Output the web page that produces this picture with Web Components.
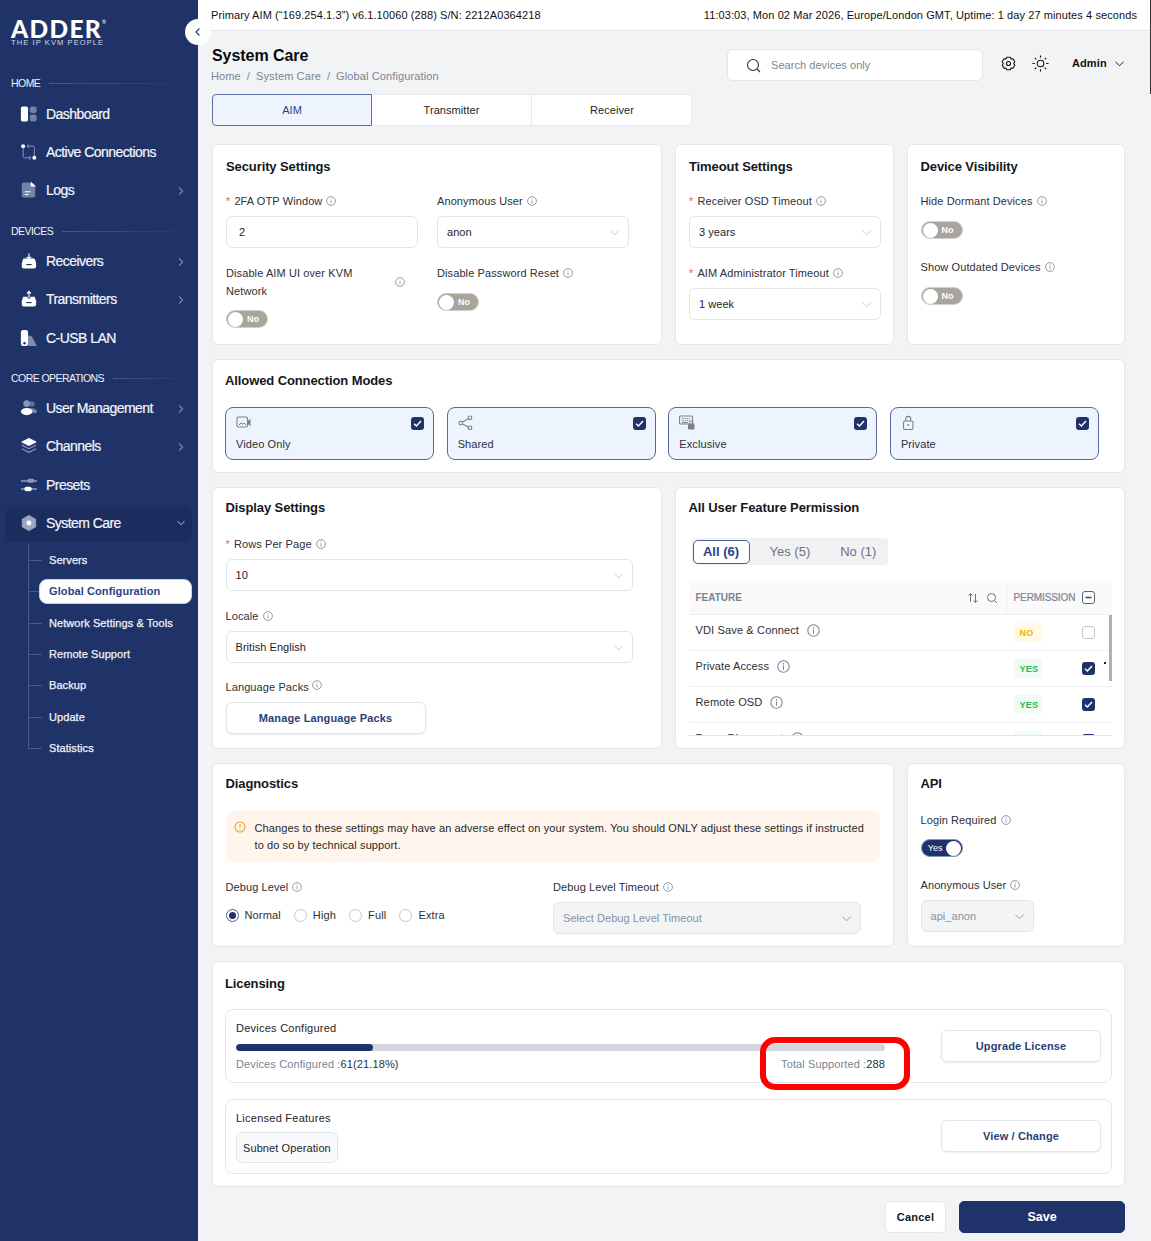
<!DOCTYPE html>
<html lang="en">
<head>
<meta charset="utf-8">
<title>System Care</title>
<style>
  html, body { margin: 0; height: 1241px; overflow: hidden; background: #f2f3f5; }
  body { font-family: "Liberation Sans", Arial, sans-serif; color: #1f2329; }
</style>
</head>
<body>

<app-shell>
  <side-bar slot="side">
    <nav-heading>HOME</nav-heading>
    <nav-item icon="dashboard">Dashboard</nav-item>
    <nav-item icon="connections">Active Connections</nav-item>
    <nav-item icon="logs" arrow="right">Logs</nav-item>
    <nav-heading>DEVICES</nav-heading>
    <nav-item icon="receivers" arrow="right">Receivers</nav-item>
    <nav-item icon="transmitters" arrow="right">Transmitters</nav-item>
    <nav-item icon="cusb">C-USB LAN</nav-item>
    <nav-heading>CORE OPERATIONS</nav-heading>
    <nav-item icon="users" arrow="right">User Management</nav-item>
    <nav-item icon="channels" arrow="right">Channels</nav-item>
    <nav-item icon="presets">Presets</nav-item>
    <nav-item icon="care" arrow="down" open>System Care</nav-item>
    <sub-item>Servers</sub-item>
    <sub-item current>Global Configuration</sub-item>
    <sub-item>Network Settings &amp; Tools</sub-item>
    <sub-item>Remote Support</sub-item>
    <sub-item>Backup</sub-item>
    <sub-item>Update</sub-item>
    <sub-item last>Statistics</sub-item>
  </side-bar>

  <status-bar></status-bar>
  <page-head></page-head>
  <tab-strip></tab-strip>

  <card-row cols="450px 219px 218px" style="margin-top:18px">
    <set-card heading="Security Settings" style="--pt:12px;--pl:13px;height:201px">
      <div style="display:grid;grid-template-columns:192px 192px;column-gap:19px;row-gap:16px">
        <div><field-label required>2FA OTP Window</field-label><pick-box value="2" plain></pick-box></div>
        <div><field-label>Anonymous User</field-label><pick-box value="anon"></pick-box></div>
        <div><field-label wrap>Disable AIM UI over KVM Network</field-label><flip-toggle style="margin-top:10px"></flip-toggle></div>
        <div><field-label>Disable Password Reset</field-label><flip-toggle style="margin-top:11px"></flip-toggle></div>
      </div>
    </set-card>
    <set-card heading="Timeout Settings" style="--pt:12px;--pl:13px;height:201px">
      <div style="display:grid;width:192px;row-gap:16px">
        <div><field-label required>Receiver OSD Timeout</field-label><pick-box value="3 years"></pick-box></div>
        <div><field-label required>AIM Administrator Timeout</field-label><pick-box value="1 week"></pick-box></div>
      </div>
    </set-card>
    <set-card heading="Device Visibility" style="--pt:12px;--pl:12.5px;height:201px">
      <field-label>Hide Dormant Devices</field-label><flip-toggle style="margin-top:11px"></flip-toggle>
      <field-label style="margin-top:19px">Show Outdated Devices</field-label><flip-toggle style="margin-top:11px"></flip-toggle>
    </set-card>
  </card-row>

  <card-row cols="913px">
    <set-card heading="Allowed Connection Modes" style="--pt:11px;--pl:12px;--mb:16px;height:114px">
      <div style="display:grid;grid-template-columns:repeat(4,1fr);gap:12.5px;width:874px">
        <mode-tile icon="video">Video Only</mode-tile>
        <mode-tile icon="share">Shared</mode-tile>
        <mode-tile icon="keylock">Exclusive</mode-tile>
        <mode-tile icon="lock">Private</mode-tile>
      </div>
    </set-card>
  </card-row>

  <card-row cols="450px 450px">
    <set-card heading="Display Settings" style="--pt:10px;--pl:12.5px;--mb:17px;height:262px">
      <div style="display:grid;width:407px">
        <div><field-label required>Rows Per Page</field-label><pick-box value="10"></pick-box></div>
        <div style="margin-top:16px"><field-label>Locale</field-label><pick-box value="British English"></pick-box></div>
        <div style="margin-top:15px"><field-label raised>Language Packs</field-label><line-button style="width:200px">Manage Language Packs</line-button></div>
      </div>
    </set-card>
    <set-card heading="All User Feature Permission" style="--pt:10px;--pl:12.5px;--mb:20px;height:262px">
      <seg-filter></seg-filter>
      <perm-table style="margin-top:16px">
        <perm-row feature="VDI Save &amp; Connect" no size="11.1"></perm-row>
        <perm-row feature="Private Access" size="11"></perm-row>
        <perm-row feature="Remote OSD" size="11.1"></perm-row>
        <perm-row feature="Force Disconnect" size="11.1"></perm-row>
      </perm-table>
    </set-card>
  </card-row>

  <card-row cols="682px 218px">
    <set-card heading="Diagnostics" style="--pt:10px;--pl:12.5px;--mb:17px;height:184px">
      <warn-note>Changes to these settings may have an adverse effect on your system. You should ONLY adjust these settings if instructed to do so by technical support.</warn-note>
      <div style="display:grid;grid-template-columns:327.5px 308px;margin-top:16px">
        <div><field-label>Debug Level</field-label>
          <radio-row style="margin-top:10px">
            <radio-opt checked>Normal</radio-opt><radio-opt>High</radio-opt><radio-opt>Full</radio-opt><radio-opt>Extra</radio-opt>
          </radio-row>
        </div>
        <div><field-label>Debug Level Timeout</field-label><pick-box placeholder="Select Debug Level Timeout" disabled></pick-box></div>
      </div>
    </set-card>
    <set-card heading="API" style="--pt:10px;--pl:12.5px;--mb:17px;height:184px">
      <field-label>Login Required</field-label><flip-toggle on style="margin-top:10px"></flip-toggle>
      <field-label style="margin-top:19px">Anonymous User</field-label>
      <pick-box placeholder="api_anon" disabled style="width:113px"></pick-box>
    </set-card>
  </card-row>

  <card-row cols="913px">
    <set-card heading="Licensing" style="--pt:12px;--pl:12px;--mb:15px;height:226px">
      <license-box action="Upgrade License" style="height:74px">
        <div style="font-size:11px;line-height:18px;letter-spacing:.25px">Devices Configured</div>
        <usage-bar used="21.18"></usage-bar>
        <red-mark></red-mark>
      </license-box>
      <license-box action="View / Change" style="height:75px;margin-top:16px">
        <div style="font-size:11px;line-height:18px;letter-spacing:.25px">Licensed Features</div>
        <feature-chip>Subnet Operation</feature-chip>
      </license-box>
    </set-card>
  </card-row>

  <form-actions></form-actions>
</app-shell>

<script>
// icons used by the sidebar, drawn in a 19x19 box
const NAV_ICONS = {
  dashboard: `<rect x="1" y="1" width="8" height="17" rx="2" fill="#fff"/><rect x="11" y="1" width="7.500" height="7.500" rx="2" fill="#6f7fa6"/><rect x="11" y="10" width="7.500" height="8" rx="2" fill="#6f7fa6"/>`,
  connections: `<circle cx="3.500" cy="3" r="2.200" fill="#fff"/><circle cx="16" cy="16" r="2.200" fill="#fff"/><path d="M3.500 5v9.500A1.500 1.500 0 0 0 5 16h7M10 14l2.200 2-2.200 2M16 14V4.500A1.500 1.500 0 0 0 14.500 3H8M10 1L7.800 3 10 5" fill="none" stroke="#8a97b8" stroke-width="1.100"/>`,
  logs: `<path d="M4 1h7l6 5.500V16a2 2 0 0 1-2 2H4a2 2 0 0 1-2-2V3a2 2 0 0 1 2-2z" fill="#7382a8"/><path d="M12 0l6 5.500h-6z" fill="#fff"/><path d="M5.500 11.500h6.500M5.500 14.500h4" stroke="#fff" stroke-width="1.300"/>`,
  receivers: `<path d="M5 7h3M12 7h3" stroke="#8a97b8" stroke-width="2"/><path d="M3.500 7h13L18 12v4a2 2 0 0 1-2 2H4a2 2 0 0 1-2-2v-4z" fill="#fff"/><path d="M7 13.500h6" stroke="#1f3368" stroke-width="1.300"/><path d="M10 1v6M7.800 5L10 7.500 12.200 5" fill="none" stroke="#fff" stroke-width="1.300"/>`,
  transmitters: `<path d="M3.500 7h13L18 12v4a2 2 0 0 1-2 2H4a2 2 0 0 1-2-2v-4z" fill="#fff"/><path d="M7 13.500h6" stroke="#1f3368" stroke-width="1.300"/><path d="M10 9V1M7.800 3.500L10 1l2.200 2.500" fill="none" stroke="#1f3368" stroke-width="3"/><path d="M10 8V1M7.800 3.500L10 1l2.200 2.500" fill="none" stroke="#fff" stroke-width="1.300"/>`,
  cusb: `<path d="M9 6.500l4 1 6 11H9z" fill="#7f8db1"/><rect x="1" y="0.500" width="8" height="18" rx="2.500" fill="#fff"/><circle cx="5" cy="15.500" r="1.400" fill="#1f3368"/>`,
  users: `<circle cx="13.500" cy="5" r="3" fill="#5f6f9a"/><path d="M11 10c4-1 8 .5 8 3.500 0 1.500-2 2-4 2z" fill="#7382a8"/><circle cx="7.500" cy="4.500" r="3.800" fill="#8a97b8"/><ellipse cx="7.500" cy="13.500" rx="6.500" ry="4" fill="#fff"/>`,
  channels: `<path d="M10 1l8 4-8 4-8-4z" fill="#fff" stroke="#fff" stroke-linejoin="round"/><path d="M2 8.500l8 4 8-4M2 12.500l8 4 8-4" fill="none" stroke="#8a97b8" stroke-width="1.300"/>`,
  presets: `<path d="M1 5h18M1 14h18" stroke="#c9d0e0" stroke-width="1.200"/><rect x="8" y="2.500" width="8" height="4.500" rx="2" fill="#8a97b8"/><rect x="5" y="11.500" width="8" height="5" rx="2" fill="#fff"/>`,
  care: `<path d="M10 1l7.500 4.300v8.400L10 18l-7.500-4.300V5.300z" fill="#9aa6c4" stroke="#9aa6c4" stroke-linejoin="round"/><circle cx="10" cy="9.500" r="2.700" fill="#fff"/>`
};

// icons for the connection mode tiles
const MODE_ICONS = {
  video: `<rect x="1" y="2" width="10.500" height="10" rx="1.500" fill="none" stroke="#7b8088" stroke-width="1.100"/><path d="M3 10l2-2 1.500 1.200L8 8l2 2" fill="none" stroke="#7b8088"/><path d="M11.500 6l3-2v7l-3-2z" fill="#7b8088"/>`,
  share: `<circle cx="12" cy="2.800" r="1.800" fill="none" stroke="#7b8088" stroke-width="1.100"/><circle cx="2.800" cy="8" r="1.800" fill="none" stroke="#7b8088" stroke-width="1.100"/><circle cx="12" cy="12.800" r="1.800" fill="none" stroke="#7b8088" stroke-width="1.100"/><path d="M4.400 7l6-3.200M4.400 9l6 3" stroke="#7b8088" stroke-width="1.100"/>`,
  keylock: `<rect x="0.500" y="1" width="13" height="8" rx="1" fill="none" stroke="#7b8088" stroke-width="1.100"/><path d="M2.500 3.500h9M2.500 5.500h9" stroke="#7b8088" stroke-width="1.200" stroke-dasharray="1 .8"/><path d="M3 7.500h6" stroke="#7b8088"/><rect x="9" y="9" width="6.500" height="5.500" rx="1" fill="#7b8088"/><path d="M10.500 9V7.500a1.800 1.800 0 0 1 3.500 0V9" fill="none" stroke="#7b8088"/>`,
  lock: `<rect x="2.500" y="6" width="9.500" height="8.500" rx="1.500" fill="none" stroke="#7b8088" stroke-width="1.100"/><path d="M4.800 6V3.800a2.400 2.400 0 0 1 4.900 0V6" fill="none" stroke="#7b8088" stroke-width="1.100"/><circle cx="7.300" cy="10" r=".9" fill="#7b8088"/>`
};

const CHEVRON = (c, size) => `<svg width="${size}" height="${size}" viewBox="0 0 12 12" fill="none" stroke="${c}" stroke-width="1"><path d="M1.500 4l4.500 4.500L10.500 4"/></svg>`;

class AppShell extends HTMLElement {
  constructor() {
    super();
    this.attachShadow({ mode: 'open' }).innerHTML = `
      <style>
        :host { display: grid; grid-template-columns: 198px 953px; height: 1241px; position: relative; }
        main { display: block; min-width: 0; }
        .edge { position: absolute; right: 0; top: 0; width: 1px; height: 94px; background: #333; }
        .collapse { position: absolute; left: 185px; top: 19px; width: 26px; height: 26px; border-radius: 50%; background: #fff;
          display: flex; align-items: center; justify-content: center; }
      </style>
      <slot name="side"></slot>
      <main><slot></slot></main>
      <div class="edge"></div>
      <div class="collapse"><svg width="10" height="10" viewBox="0 0 10 10" fill="none" stroke="#2a4387" stroke-width="1.200"><path d="M6.500 1.500L3 5l3.500 3.500"/></svg></div>`;
  }
}

class SideBar extends HTMLElement {
  constructor() {
    super();
    this.attachShadow({ mode: 'open' }).innerHTML = `
      <style>
        :host { display: block; background: #1f3368; color: #fff; height: 1241px; }
        .logo { height: 72px; box-sizing: border-box; padding: 17.5px 0 0 11px; position: relative; }
        .name { font: 900 24.5px/21px Lato, sans-serif; letter-spacing: 1.3px; }
        .name sup { font-size: 5px; font-weight: 400; vertical-align: 14px; letter-spacing: 0; line-height: 0; }
        .strap { font: 400 7.5px/9px "Liberation Sans", sans-serif; letter-spacing: 1.1px; color: #d5daea; margin-top: -1px; }
      </style>
      <div class="logo"><div class="name">ADDER<sup>®</sup></div><div class="strap">THE IP KVM PEOPLE</div></div>
      <slot></slot>`;
  }
}

class NavHeading extends HTMLElement {
  constructor() {
    super();
    this.attachShadow({ mode: 'open' }).innerHTML = `
      <style>
        :host { display: flex; align-items: center; height: 22px; padding-left: 11px; margin-top: 10.5px; font-size: 10.5px; letter-spacing: -.55px; color: #eef0f6; gap: 9px; }
        :host(:first-of-type) { margin-top: 0; margin-bottom: 1px; }
        i { flex: 1; height: 1px; margin-right: 16px; background: linear-gradient(90deg, #46598c, #223669); }
      </style>
      <slot></slot><i></i>`;
  }
}

class NavItem extends HTMLElement {
  constructor() {
    super();
    const arrow = this.getAttribute('arrow');
    const glyph = arrow === 'right'
      ? `<svg class="arrow" width="10" height="10" viewBox="0 0 10 10" fill="none" stroke="#b8c0d6" stroke-width="1"><path d="M3 1.500L6.700 5 3 8.500"/></svg>`
      : arrow === 'down'
        ? `<svg class="arrow" width="10" height="10" viewBox="0 0 10 10" fill="none" stroke="#b8c0d6" stroke-width="1"><path d="M1.500 3L5 6.700 8.500 3"/></svg>` : '';
    this.attachShadow({ mode: 'open' }).innerHTML = `
      <style>
        :host { display: flex; align-items: center; height: 38.2px; padding-left: 20px; box-sizing: border-box; font-size: 14px; letter-spacing: -.55px; color: #f4f6fa; -webkit-text-stroke: .2px #f4f6fa; position: relative; }
        :host([open]) { height: 35px; margin: 3px 6px 2.7px 5px; padding: 0 0 3px 15px; background: #1c2c5e; border-radius: 8px; }
        svg.ico { width: 17px; height: 18px; margin-right: 9px; flex: none; }
        .arrow { position: absolute; right: 12px; top: 50%; margin-top: -4px; }
        :host([open]) .arrow { right: 6px; margin-top: -6px; }
      </style>
      <svg class="ico" viewBox="0 0 19 19">${NAV_ICONS[this.getAttribute('icon')]}</svg>
      <span><slot></slot></span>${glyph}`;
  }
}

class SubItem extends HTMLElement {
  constructor() {
    super();
    this.attachShadow({ mode: 'open' }).innerHTML = `
      <style>
        :host { display: flex; align-items: center; height: 31.35px; margin: 0 6px 0 39px; position: relative; font-size: 11px; letter-spacing: .07px; color: #f0f2f7; -webkit-text-stroke: .25px #f0f2f7; }
        :host(:not([last]))::after { content: ""; position: absolute; left: -11px; top: 0; bottom: 0; width: 1px; background: #46598c; }
        :host([last])::after { content: ""; position: absolute; left: -11px; top: 0; height: 50%; width: 1px; background: #46598c; }
        :host::before { content: ""; position: absolute; left: -11px; width: 14px; top: 50%; height: 1px; background: #46598c; }
        span { display: flex; align-items: center; height: 25px; padding: 0 0 0 10px; flex: 1; position: relative; z-index: 1; box-sizing: border-box; }
        :host([current]) span { background: #fff; border-radius: 8px; color: #2a4387; -webkit-text-stroke: 0; font-weight: 700; letter-spacing: .1px; border: 1px solid #c9d0e0; padding-left: 9px; }
      </style>
      <span><slot></slot></span>`;
  }
}

class StatusBar extends HTMLElement {
  constructor() {
    super();
    this.attachShadow({ mode: 'open' }).innerHTML = `
      <style>
        :host { display: flex; justify-content: space-between; align-items: center; height: 31px; box-sizing: border-box; padding: 0 14px 1px 13px; background: #fff; border-bottom: 1px solid #e3e4e8; font-size: 11px; letter-spacing: .09px; color: #111; white-space: nowrap; }
      </style>
      <span>Primary AIM (“169.254.1.3”) v6.1.10060 (288) S/N: 2212A0364218</span>
      <span>11:03:03, Mon 02 Mar 2026, Europe/London GMT, Uptime: 1 day 27 minutes 4 seconds</span>`;
  }
}

class PageHead extends HTMLElement {
  constructor() {
    super();
    this.attachShadow({ mode: 'open' }).innerHTML = `
      <style>
        :host { display: flex; height: 63px; box-sizing: border-box; padding-left: 14px; position: relative; }
        h1 { margin: 15px 0 0; font-size: 16px; line-height: 20px; font-weight: 700; color: #0b0b0b; letter-spacing: -.05px; }
        .crumbs { display: flex; gap: 6px; font-size: 11px; line-height: 14px; margin-top: 3px; color: #7b8494; letter-spacing: .12px; margin-left: -1px; }
        .tools { margin-left: auto; display: flex; align-items: flex-start; padding-top: 18px; }
        .search { width: 256px; height: 32px; box-sizing: border-box; background: #fff; border: 1px solid #e3e5ea; border-radius: 6px; display: flex; align-items: center; padding-left: 18px; font-size: 11px; color: #7b8494; gap: 10px; letter-spacing: .05px; }
        .ico { margin-left: 18px; margin-top: 7px; }
        .user { margin-left: 23px; margin-top: 7px; margin-right: 17px; width: 62px; display: flex; align-items: center; gap: 7px; font-size: 11px; font-weight: 700; color: #111; letter-spacing: .1px; line-height: 14px; }
      </style>
      <div>
        <h1>System Care</h1>
        <div class="crumbs"><span>Home</span><span>/</span><span>System Care</span><span>/</span><span>Global Configuration</span></div>
      </div>
      <div class="tools">
        <div class="search">
          <svg width="15" height="15" viewBox="0 0 15 15" fill="none" stroke="#333" stroke-width="1.100"><circle cx="7" cy="7" r="5.500"/><path d="M11 11l3 3"/></svg>
          Search devices only
        </div>
        <svg class="ico" width="15" height="15" viewBox="0 0 15 15" fill="none" stroke="#111" stroke-width="1.100" style="margin-left:18px"><path d="M5.700 1.200h3.600l.8 1.800 1.900-.2 1.800 3-1.100 1.700 1.100 1.700-1.800 3-1.900-.2-.8 1.800H5.700l-.8-1.800-1.900.2-1.800-3 1.100-1.700-1.100-1.700 1.800-3 1.900.2z" stroke-linejoin="round"/><circle cx="7.500" cy="7.500" r="2"/></svg>
        <svg class="ico" width="17" height="17" viewBox="0 0 17 17" fill="none" stroke="#111" stroke-width="1.100" style="margin-left:16px;margin-top:6px"><circle cx="8.500" cy="8.500" r="3.300"/><path d="M8.500 .5v2.300M8.500 14.200v2.300M.5 8.500h2.300M14.200 8.500h2.300M2.800 2.800l1.500 1.500M12.700 12.700l1.500 1.500M2.800 14.200l1.500-1.500M12.700 4.300l1.500-1.500"/></svg>
        <div class="user">Admin ${CHEVRON('#111', 11)}</div>
      </div>`;
  }
}

class TabStrip extends HTMLElement {
  constructor() {
    super();
    this.attachShadow({ mode: 'open' }).innerHTML = `
      <style>
        :host { display: grid; grid-template-columns: repeat(3, 160px); margin-left: 14px; width: 480px; height: 32px; font-size: 11px; letter-spacing: .05px; box-sizing: border-box; background: #fff; border-radius: 4px; box-shadow: 0 0 0 1px #e8e9ee inset; }
        div { display: flex; align-items: center; justify-content: center; color: #1b1f27; border-right: 1px solid #e8e9ee; }
        div:last-child { border-right: 0; }
        .on { background: #edf4fe; border: 1px solid #5b6f9f; border-radius: 4px 0 0 4px; color: #2a4387; }
      </style>
      <div class="on">AIM</div><div>Transmitter</div><div>Receiver</div>`;
  }
}

class CardRow extends HTMLElement {
  constructor() {
    super();
    this.attachShadow({ mode: 'open' }).innerHTML = `
      <style>
        :host { display: grid; grid-template-columns: ${this.getAttribute('cols')}; column-gap: 13px; margin: 14px 0 0 14px; }
      </style>
      <slot></slot>`;
  }
}

class SetCard extends HTMLElement {
  constructor() {
    super();
    this.attachShadow({ mode: 'open' }).innerHTML = `
      <style>
        :host { display: block; box-sizing: border-box; background: #fff; border: 1px solid #e6e7ec; border-radius: 6px; padding: var(--pt, 12px) 12px 0 var(--pl, 13px); }
        h2 { margin: 0 0 var(--mb, 15px); font-size: 13px; line-height: 20px; font-weight: 700; color: #14171c; letter-spacing: -.1px; }
      </style>
      <h2>${this.getAttribute('heading')}</h2>
      <slot></slot>`;
  }
}

class InfoMark extends HTMLElement {
  constructor() {
    super();
    const s = this.getAttribute('size') || 10;
    this.attachShadow({ mode: 'open' }).innerHTML = `
      <style>:host { display: inline-flex; flex: none; }</style>
      <svg width="${s}" height="${s}" viewBox="0 0 10 10" fill="none" stroke="${this.getAttribute('color') || '#7b8494'}" stroke-width=".8"><circle cx="5" cy="5" r="4.400"/><path d="M5 4.300V7.500M5 2.400v1"/></svg>`;
  }
}

class FieldLabel extends HTMLElement {
  constructor() {
    super();
    const wrap = this.hasAttribute('wrap');
    this.attachShadow({ mode: 'open' }).innerHTML = `
      <style>
        :host { display: flex; align-items: center; gap: 4px; min-height: 18px; margin-bottom: 6px; font-size: 11px; line-height: 18px; color: #2c3038; letter-spacing: .1px; }
        b { color: #f06060; font-weight: 400; }
        span { ${wrap ? 'width: 150px; margin-right: 15px;' : ''} }
        :host([raised]) info-mark { margin: -4px 0 0 -1px; }
      </style>
      ${this.hasAttribute('required') ? '<b>*</b>' : ''}<span><slot></slot></span><info-mark></info-mark>`;
  }
}

class PickBox extends HTMLElement {
  constructor() {
    super();
    const val = this.getAttribute('value');
    const off = this.hasAttribute('disabled');
    this.attachShadow({ mode: 'open' }).innerHTML = `
      <style>
        :host { display: flex; align-items: center; justify-content: space-between; height: 32px; box-sizing: border-box; background: #fff; border: 1px solid #e3e5ea; border-radius: 6px; padding: 0 8px 0 9px; font-size: 11px; color: #1f2329; letter-spacing: .05px; }
        :host([plain]) { padding-left: 12px; }
        :host([disabled]) { background: #f3f4f6; color: #8a90a0; }
        svg { flex: none; }
      </style>
      <span>${val || this.getAttribute('placeholder')}</span>
      ${this.hasAttribute('plain') ? '' : CHEVRON(off ? '#8a90a0' : '#c3c6cd', 11)}`;
  }
}

class FlipToggle extends HTMLElement {
  constructor() {
    super();
    const on = this.hasAttribute('on');
    this.attachShadow({ mode: 'open' }).innerHTML = `
      <style>
        :host { display: flex; align-items: center; width: 42px; height: 18px; box-sizing: border-box; border-radius: 9px; background: #a9a49c; border: 1px solid #cfd0d4; color: #fff; font-size: 9px; font-weight: 700; padding: 0 2px 0 1px; gap: 4px; }
        :host([on]) { background: #1f3368; border-color: #8793b3; flex-direction: row-reverse; justify-content: flex-start; padding: 0 1px 0 5px; font-weight: 400; gap: 3px; }
        i { width: 15px; height: 15px; border-radius: 50%; background: #fff; flex: none; }
      </style>
      <i></i><span>${on ? 'Yes' : 'No'}</span>`;
  }
}

class TickBox extends HTMLElement {
  constructor() {
    super();
    const off = this.hasAttribute('empty');
    this.attachShadow({ mode: 'open' }).innerHTML = `
      <style>
        :host { display: inline-flex; width: 13px; height: 13px; box-sizing: border-box; border-radius: 3px; align-items: center; justify-content: center; background: #1f3368; flex: none; }
        :host([empty]) { background: #fff; border: 1px solid #c4c7cf; }
        :host([dash]) { background: #fff; border: 1px solid #5b6478; }
      </style>
      ${off ? '' : this.hasAttribute('dash')
        ? `<svg width="9" height="9" viewBox="0 0 9 9"><path d="M1.500 4.500h6" stroke="#3c4558" stroke-width="1.300"/></svg>`
        : `<svg width="9" height="9" viewBox="0 0 9 9" fill="none" stroke="#fff" stroke-width="1.500"><path d="M1 4.800l2.400 2.200L8 2"/></svg>`}`;
  }
}

class ModeTile extends HTMLElement {
  constructor() {
    super();
    this.attachShadow({ mode: 'open' }).innerHTML = `
      <style>
        :host { display: block; position: relative; height: 53px; box-sizing: border-box; background: #edf4fe; border: 1px solid #56699a; border-radius: 8px; padding: 7px 10px 0; font-size: 11px; color: #2c3038; letter-spacing: .1px; }
        svg { display: block; }
        div { margin-top: 6px; line-height: 16px; }
        tick-box { position: absolute; right: 9px; top: 9px; }
      </style>
      <svg width="16" height="15" viewBox="0 0 16 15">${MODE_ICONS[this.getAttribute('icon')]}</svg>
      <div><slot></slot></div>
      <tick-box></tick-box>`;
  }
}

class SegFilter extends HTMLElement {
  constructor() {
    super();
    this.attachShadow({ mode: 'open' }).innerHTML = `
      <style>
        :host { display: flex; align-items: center; width: 196px; height: 27px; margin-left: 3px; box-sizing: border-box; padding-left: 1px; background: #f1f1f3; border-radius: 4px; font-size: 13px; color: #6e7585; }
        b { display: flex; align-items: center; justify-content: center; width: 57px; height: 24px; box-sizing: border-box; background: #fff; border: 1px solid #4a5f95; border-radius: 5px; color: #2a4387; }
        span:nth-of-type(1) { margin-left: 20px; }
        span:nth-of-type(2) { margin-left: 30px; }
      </style>
      <b>All (6)</b><span>Yes (5)</span><span>No (1)</span>`;
  }
}

class PermTable extends HTMLElement {
  constructor() {
    super();
    this.attachShadow({ mode: 'open' }).innerHTML = `
      <style>
        :host { display: block; position: relative; width: 423px; height: 155px; overflow: hidden; border-radius: 6px 6px 0 0; border-bottom: 1px solid #e3e5ea; box-sizing: border-box; }
        .head { display: grid; grid-template-columns: 318px 105px; height: 34px; background: #fafafa; border-bottom: 1px solid #eeeff2; box-sizing: border-box; font-size: 10px; font-weight: 700; color: #7b8294; }
        .head > div { display: flex; align-items: center; }
        .feat { padding: 0 8px 0 7px; border-right: 1px solid #eeeff2; gap: 7px; }
        .feat span { margin-right: auto; }
        .perm { padding-left: 7px; font-weight: 400; -webkit-text-stroke: .2px #7b8294; letter-spacing: -.1px; }
        .perm tick-box { margin-left: 7px; }
        .bar { position: absolute; right: 0; top: 34px; width: 3px; height: 66px; background: #aeb0b5; }
        .dot { position: absolute; right: 6px; top: 81px; width: 2px; height: 2px; background: #222; }
      </style>
      <div class="head">
        <div class="feat"><span>FEATURE</span>
          <svg width="12" height="12" viewBox="0 0 12 12" fill="none" stroke="#6c7384" stroke-width="1"><path d="M3.500 10V1.500M1.500 3.500l2-2 2 2M8.500 2v8.500M6.500 8.500l2 2 2-2"/></svg>
          <svg width="12" height="12" viewBox="0 0 12 12" fill="none" stroke="#6c7384" stroke-width="1"><circle cx="5.500" cy="5.500" r="4"/><path d="M8.500 8.500l2.500 2.500"/></svg>
        </div>
        <div class="perm">PERMISSION<tick-box dash></tick-box></div>
      </div>
      <slot></slot>
      <div class="bar"></div><div class="dot"></div>`;
  }
}

class PermRow extends HTMLElement {
  constructor() {
    super();
    const no = this.hasAttribute('no');
    this.attachShadow({ mode: 'open' }).innerHTML = `
      <style>
        :host { display: grid; grid-template-columns: 318px 105px; height: 36px; box-sizing: border-box; border-bottom: 1px solid #eeeff2; align-items: center; font-size: ${this.getAttribute('size')}px; color: #2c3038; letter-spacing: .1px; }
        .f { display: flex; align-items: center; gap: 8px; padding: 0 0 5px 7px; }
        .p { display: flex; align-items: center; padding-left: 7px; }
        .tag { width: 28px; height: 19px; display: flex; align-items: center; padding-left: 6px; box-sizing: border-box; background: ${no ? '#fff9e6' : '#f0fbf3'}; color: ${no ? '#f2b200' : '#21bd5c'}; font-size: 9px; font-weight: 700; letter-spacing: .3px; border-radius: 2px; }
        tick-box { margin-left: 40px; }
      </style>
      <div class="f">${this.getAttribute('feature')} <info-mark size="13"></info-mark></div>
      <div class="p"><span class="tag">${no ? 'NO' : 'YES'}</span><tick-box ${no ? 'empty' : ''}></tick-box></div>`;
  }
}

class LineButton extends HTMLElement {
  constructor() {
    super();
    this.attachShadow({ mode: 'open' }).innerHTML = `
      <style>
        :host { display: flex; align-items: center; justify-content: center; height: 32px; box-sizing: border-box; background: #fff; border: 1px solid #e3e5ea; border-radius: 6px; box-shadow: 0 1px 2px rgba(20,30,60,.08); font-size: 11px; font-weight: 700; color: #2a3f78; letter-spacing: .12px; }
      </style>
      <slot></slot>`;
  }
}

class WarnNote extends HTMLElement {
  constructor() {
    super();
    this.attachShadow({ mode: 'open' }).innerHTML = `
      <style>
        :host { display: flex; width: 654.5px; height: 51px; box-sizing: border-box; background: #fff5ec; border-radius: 8px; padding: 9px 14px 0 8px; font-size: 11px; line-height: 17px; color: #25282e; letter-spacing: .1px; gap: 9px; }
        svg { flex: none; margin-top: 1px; }
      </style>
      <svg width="12" height="12" viewBox="0 0 12 12" fill="none" stroke="#f0a22e" stroke-width="1.100"><circle cx="6" cy="6" r="5"/><path d="M6 3v3.800M6 8v1.200"/></svg>
      <span><slot></slot></span>`;
  }
}

class RadioRow extends HTMLElement {
  constructor() {
    super();
    this.attachShadow({ mode: 'open' }).innerHTML = `
      <style>:host { display: flex; align-items: center; height: 18px; }</style>
      <slot></slot>`;
  }
}

class RadioOpt extends HTMLElement {
  constructor() {
    super();
    this.attachShadow({ mode: 'open' }).innerHTML = `
      <style>
        :host { display: inline-flex; align-items: center; gap: 6px; margin-right: 13px; font-size: 11px; color: #2c3038; letter-spacing: .15px; }
        i { width: 13px; height: 13px; box-sizing: border-box; border: 1px solid #c4c7cf; border-radius: 50%; background: #fff; display: flex; align-items: center; justify-content: center; }
        :host([checked]) i { border-color: #4a5f95; }
        :host([checked]) i::after { content: ""; width: 7px; height: 7px; border-radius: 50%; background: #1f3368; }
      </style>
      <i></i><span><slot></slot></span>`;
  }
}

class LicenseBox extends HTMLElement {
  constructor() {
    super();
    this.attachShadow({ mode: 'open' }).innerHTML = `
      <style>
        :host { display: flex; position: relative; width: 887px; box-sizing: border-box; border: 1px solid #e6e7ec; border-radius: 8px; padding: 9px 10px 0 10px; }
        .body { width: 649px; }
        line-button { width: 160px; position: absolute; right: 10px; top: 20px; }
      </style>
      <div class="body"><slot></slot></div>
      <line-button>${this.getAttribute('action')}</line-button>`;
  }
}

class UsageBar extends HTMLElement {
  constructor() {
    super();
    this.attachShadow({ mode: 'open' }).innerHTML = `
      <style>
        :host { display: block; margin-top: 7px; }
        .track { height: 7px; border-radius: 4px; background: #d3d6de; overflow: hidden; }
        .fill { height: 100%; width: ${this.getAttribute('used')}%; border-radius: 4px; background: #1f3368; }
        .legend { display: flex; justify-content: space-between; font-size: 11px; line-height: 18px; margin-top: 4px; color: #2c3038; letter-spacing: .12px; }
        em { font-style: normal; color: #7b8494; }
      </style>
      <div class="track"><div class="fill"></div></div>
      <div class="legend"><span><em>Devices Configured :</em>61(21.18%)</span><span><em>Total Supported :</em>288</span></div>`;
  }
}

class RedMark extends HTMLElement {
  constructor() {
    super();
    this.attachShadow({ mode: 'open' }).innerHTML = `
      <style>
        :host { display: block; position: absolute; left: 534px; top: 27px; width: 150px; height: 53px; box-sizing: border-box; border: 6px solid #f00; border-radius: 15px; pointer-events: none; }
      </style>`;
  }
}

class FeatureChip extends HTMLElement {
  constructor() {
    super();
    this.attachShadow({ mode: 'open' }).innerHTML = `
      <style>
        :host { display: inline-flex; align-items: center; height: 31px; box-sizing: border-box; margin-top: 5px; padding: 0 6px; background: #f9fafb; border: 1px solid #e3e5ea; border-radius: 6px; font-size: 11px; color: #1f2329; letter-spacing: .1px; }
      </style>
      <slot></slot>`;
  }
}

class FormActions extends HTMLElement {
  constructor() {
    super();
    this.attachShadow({ mode: 'open' }).innerHTML = `
      <style>
        :host { display: flex; justify-content: flex-end; gap: 13px; width: 913px; margin: 14px 0 0 14px; height: 31.5px; }
        button { font: 700 11px "Liberation Sans", sans-serif; height: 31.5px; border-radius: 5px; box-sizing: border-box; padding: 0; }
        .c { width: 61px; background: #fff; border: 1px solid #e6e7ec; color: #14171c; letter-spacing: .25px; }
        .s { width: 166px; background: #1f3269; border: 1px solid #1f3269; color: #fff; font-size: 12.5px; }
      </style>
      <button class="c">Cancel</button><button class="s">Save</button>`;
  }
}

customElements.define('info-mark', InfoMark);
customElements.define('tick-box', TickBox);
customElements.define('line-button', LineButton);
customElements.define('app-shell', AppShell);
customElements.define('side-bar', SideBar);
customElements.define('nav-heading', NavHeading);
customElements.define('nav-item', NavItem);
customElements.define('sub-item', SubItem);
customElements.define('status-bar', StatusBar);
customElements.define('page-head', PageHead);
customElements.define('tab-strip', TabStrip);
customElements.define('card-row', CardRow);
customElements.define('set-card', SetCard);
customElements.define('field-label', FieldLabel);
customElements.define('pick-box', PickBox);
customElements.define('flip-toggle', FlipToggle);
customElements.define('mode-tile', ModeTile);
customElements.define('seg-filter', SegFilter);
customElements.define('perm-table', PermTable);
customElements.define('perm-row', PermRow);
customElements.define('warn-note', WarnNote);
customElements.define('radio-row', RadioRow);
customElements.define('radio-opt', RadioOpt);
customElements.define('license-box', LicenseBox);
customElements.define('usage-bar', UsageBar);
customElements.define('red-mark', RedMark);
customElements.define('feature-chip', FeatureChip);
customElements.define('form-actions', FormActions);
</script>
</body>
</html>
